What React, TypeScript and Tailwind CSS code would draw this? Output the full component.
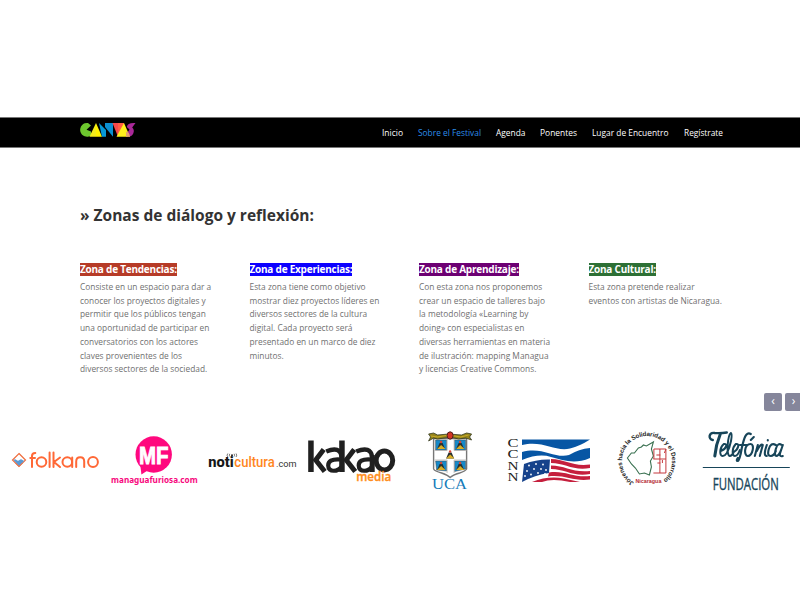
import React from "react";

const nav = [
  { label: "Inicio", w: 21 },
  { label: "Sobre el Festival", w: 63, active: true },
  { label: "Agenda", w: 29.5 },
  { label: "Ponentes", w: 37 },
  { label: "Lugar de Encuentro", w: 76.5 },
  { label: "Regístrate", w: 39 },
];

const zones = [
  {
    title: "Zona de Tendencias:",
    color: "bg-[#b63b27]",
    lines: ["Consiste en un espacio para dar a", "conocer los proyectos digitales y", "permitir que los públicos tengan", "una oportunidad de participar en", "conversatorios con los actores", "claves provenientes de los", "diversos sectores de la sociedad."],
  },
  {
    title: "Zona de Experiencias:",
    color: "bg-[#0c00ff]",
    lines: ["Esta zona tiene como objetivo", "mostrar diez proyectos líderes en", "diversos sectores de la cultura", "digital. Cada proyecto será", "presentado en un marco de diez", "minutos."],
  },
  {
    title: "Zona de Aprendizaje:",
    color: "bg-[#6d0073]",
    lines: ["Con esta zona nos proponemos", "crear un espacio de talleres bajo", "la metodología «Learning by", "doing» con especialistas en", "diversas herramientas en materia", "de ilustración: mapping Managua", "y licencias Creative Commons."],
  },
  {
    title: "Zona Cultural:",
    color: "bg-[#2d7035]",
    lines: ["Esta zona pretende realizar", "eventos con artistas de Nicaragua."],
  },
];

function Logo({ x, children }: { x: number; children: React.ReactNode }) {
  return (
    <svg className="h-[74px] w-[88px] shrink-0 overflow-visible" viewBox={`${x} 427 88 74`}>
      {children}
    </svg>
  );
}

function CanvasLogo() {
  return (
    <svg className="h-[16px] w-[56px]" viewBox="80 122 56 16">
      <path d="M88 123A6.9 6.9 0 1 0 91 135.5V131.5L86.5 129.8L91 125.5Z" fill="#6dc72e" />
      <path d="M96 123V136.7H89.5Z" fill="#f4ec1b" />
      <path d="M96 123L102 136.7H96Z" fill="#fff200" />
      <path d="M99 123L106 130V136.7H102Z" fill="#0798d5" />
      <path d="M105 123H113V136.7L105 127Z" fill="#0b8fd0" />
      <path d="M112.5 123H124L118 136.7Z" fill="#f5494a" />
      <path d="M118 123H124V129L118 136Z" fill="#ff5d43" />
      <path d="M124 123L130 136.7H116.5Z" fill="#fff01b" />
      <path d="M135.5 123Q127.5 122.3 126.8 127L129.5 129.5L127.8 132V136.7A6 5.5 0 0 0 132.2 127.5Z" fill="#a92898" />
      <path d="M126 132Q129 131 130 136.7H126Z" fill="#e6a36c" />
    </svg>
  );
}

function Volcano({ x, y }: { x: number; y: number }) {
  return (
    <g transform={`translate(${x} ${y})`}>
      <path d="M-4 4L-1.5-2L1.5-2L4 4Z" fill="#28302e" />
      <path d="M-4 4L0 0L4 3.5V4Z" fill="#d9ad24" />
      <circle cy="-3" r="1.2" fill="#d54435" />
    </g>
  );
}

const stars = [[529, 465.5], [536, 464], [543, 464.5], [527, 471], [534, 469], [541, 469], [546, 470], [525, 476], [531, 474.5], [538, 473], [545, 474]];

export default function App() {
  return (
    <div className="h-[600px] w-[800px] overflow-hidden bg-white pt-[117px] font-['Open_Sans',sans-serif]">
      <header className="flex h-[31px] items-start justify-between border-y border-[#777] bg-black pl-[80px] pr-[77.5px]">
        <div className="pt-[4px]"><CanvasLogo /></div>
        <nav className="flex gap-[15px] pt-[8px]">
          {nav.map((n) => (
            <svg key={n.label} className="h-[14px] overflow-visible" style={{ width: n.w }}>
              <text x="0" y="9.5" fontSize="8.3" fontWeight="500" textLength={n.w} lengthAdjust="spacingAndGlyphs" fill={n.active ? "#2c8de8" : "#fff"}>{n.label}</text>
            </svg>
          ))}
        </nav>
      </header>

      <main className="px-[80px] pt-[55px]">
        <h1 className="h-[60px] whitespace-nowrap text-[15.5px] leading-[25px] font-bold text-[#333]">» Zonas de diálogo y reflexión:</h1>
        <div className="grid grid-cols-[repeat(4,134px)] gap-x-[35.5px]">
          {zones.map((z) => (
            <section key={z.title}>
              <h2 className={`block h-[13px] w-fit whitespace-nowrap text-[10px] leading-[12.5px] font-bold tracking-[-0.23px] text-white ${z.color}`}>{z.title}</h2>
              <div className="mt-[4px] whitespace-nowrap text-[8.35px] leading-[13.7px] text-[#707070]">
                {z.lines.map((l) => <div key={l}>{l}</div>)}
              </div>
            </section>
          ))}
        </div>
      </main>

      <div className="mt-[17px] flex justify-end gap-[2.5px]">
        {["‹", "›"].map((s) => (
          <button key={s} className="flex h-[18px] w-[18px] items-center justify-center rounded-[2px] bg-[#85869b] pb-[2px] text-[12px] leading-none text-white last:-mr-[2.5px]">{s}</button>
        ))}
      </div>

      <div className="mt-[16px] flex gap-[10.6px] pl-[12px]">
        <Logo x={12}>
          <path d="M19 453.5L25.5 460L19 466.5L12.5 460Z" fill="none" stroke="#ef6c3c" strokeWidth="1.2" />
          <path d="M13.5 460Q15 458.5 16.5 460T19.5 460T22.5 460T25 460L19 466Z" fill="#5b9bd5" />
          <path d="M15.5 463L19 466.5L22.5 463" fill="none" stroke="#e6714d" />
          <g fill="none" stroke="#ff6836" strokeWidth="2" strokeLinecap="round" strokeLinejoin="round">
            <path d="M32 467V456Q32 453 35.3 453M30.3 458H35" />
            <circle cx="41.5" cy="462" r="4.8" />
            <path d="M49.6 452.5V467M53.5 452.5V467M60 457.5L54 462L60 467" />
            <circle cx="67.3" cy="462" r="4.8" /><path d="M72.2 457.5V467M76.2 467V461.5Q76.2 457.3 80.2 457.3T84.2 461.5V467" />
            <circle cx="93" cy="462" r="4.9" />
          </g>
        </Logo>

        <Logo x={110.6}>
          <path d="M140 466L141 474.5L148 470Z" fill="#ff087e" />
          <circle cx="153.3" cy="454.5" r="18.2" fill="#ff087e" />
          <text x="138.5" y="463.5" textLength="29.5" lengthAdjust="spacingAndGlyphs" fontFamily="Liberation Sans,sans-serif" fontSize="24" fontWeight="700" fill="white" stroke="white" strokeWidth=".9">MF</text>
          <text x="110.7" y="483" textLength="86.5" lengthAdjust="spacingAndGlyphs" fontFamily="Noto Sans,sans-serif" fontSize="9.3" fontWeight="700" fill="#f7087d">managuafuriosa.com</text>
        </Logo>

        <Logo x={209.2}>
          <text x="208.5" y="467" textLength="25.5" lengthAdjust="spacingAndGlyphs" fontFamily="Roboto,sans-serif" fontSize="14" fontWeight="800" fill="#171717">noti</text>
          <text x="234.5" y="467" textLength="40.5" lengthAdjust="spacingAndGlyphs" fontFamily="Roboto,sans-serif" fontSize="14" fontWeight="500" fill="#ff861d">cultura</text>
          <text x="276.3" y="467" textLength="20.5" lengthAdjust="spacingAndGlyphs" fontFamily="Roboto,sans-serif" fontSize="9.5" fill="#333">.com</text>
          <circle cx="232.2" cy="455.2" r="1" fill="#222" />
          <path d="M228 453.5Q226.5 455.2 228 457M230 453.8Q229 455.2 230 456.5M234.3 453.8Q235.3 455.2 234.3 456.5M236.3 453.5Q237.5 455.2 236.3 457" fill="none" stroke="#555" strokeWidth=".8" />
        </Logo>

        <Logo x={307.8}>
          <path d="M308 440.5H313.5V472H308ZM339 440.5H344.5V472H339ZM369.5 455H374.5V472H369.5Z" fill="#202020" />
          <g fill="none" stroke="#202020" strokeWidth="5">
            <path d="M323.5 449.5L315.5 460L324.5 471.5M354 449.5L346 460L355 471.5" />
            <path d="M326 451.5Q340 445.5 341.5 457M356 451.5Q370.5 445.5 372 457" strokeWidth="4.4" />
            <path d="M341 459.5C331 458.5 328 461.5 328 465.5C328 473 338 471.5 341 467M371.5 459.5C361.5 458.5 358.5 461.5 358.5 465.5C358.5 473 368.5 471.5 371.5 467" strokeWidth="4.2" />
            <ellipse cx="384.2" cy="460.5" rx="8.3" ry="9.4" />
          </g>
          <text x="356" y="481" textLength="35" lengthAdjust="spacingAndGlyphs" fontFamily="Open Sans,sans-serif" fontSize="12.5" fontWeight="600" fill="#ff8d20" stroke="#ff8d20" strokeWidth=".35">media</text>
        </Logo>

        <Logo x={406.4}>
          <path d="M434 438.5H467V469Q466 471 460 473Q453 475 450.5 477.5Q448 475 442 473Q435 471 434 469Z" fill="white" stroke="#777" strokeWidth="1.4" />
          <path d="M436 440H447V450H436ZM455 440H466V450H455ZM436 461H447V471L437 470ZM455 461H466V469L455 471.5Z" fill="#1689c9" stroke="#444" strokeWidth=".5" />
          <path d="M447.5 439V450.5H435M454.5 439V450.5H467M447.5 473V460H435M454.5 473V460H467" fill="none" stroke="#aaa" strokeWidth=".7" />
          <Volcano x={441.5} y={445} /><Volcano x={460.5} y={445} /><Volcano x={450.5} y={454.5} /><Volcano x={441.5} y={466} /><Volcano x={460.5} y={466} />
          <path d="M429 434L434 433L438 435L449 434L462 435L467 433L472 434L470 437L472 440L466 438L459 439L451 437L438 439L434 438L429 441L431 437Z" fill="#94831a" stroke="#333a22" strokeWidth=".8" />
          <path d="M431 436L438 437L449 435L461 437L469 435" fill="none" stroke="#d4b52d" strokeWidth=".8" />
          <ellipse cx="450.5" cy="435.5" rx="3" ry="3.7" fill="#d33525" stroke="#511f1b" />
          <text x="432.5" y="489" textLength="35" lengthAdjust="spacingAndGlyphs" fontFamily="Liberation Serif,serif" fontSize="15.5" fill="#147bb9">UCA</text>
        </Logo>

        <Logo x={505}>
          <g fontFamily="Liberation Serif,serif" fontSize="11.5" fill="#222">
            {["C", "C", "N", "N"].map((c, i) => <text key={i} x="507.5" y={447.3 + i * 11.1} textLength="11" lengthAdjust="spacingAndGlyphs">{c}</text>)}
          </g>
          <path d="M522 439.5H590Q580 446 570 448.5C555 452 543 440 522 445Z" fill="#0756a4" />
          <path d="M522 452C542 446 555 459 569 455Q579 449 590 448V458C574 465 563 460 551 457Q539 453 522 460Z" fill="#0756a4" />
          <path d="M524 464Q537 459 550 459.5L549 473Q535 475 522 482Z" fill="#16428b" />
          {stars.map(([x, y], i) => <circle key={i} cx={x} cy={y} r=".9" fill="white" />)}
          <path d="M551 459C565 459 573 467 590 464.5V468C573 471 565 463 551 463ZM551 465.5C565 465.5 573 473 590 471V474C573 477 565 469 551 469ZM549 472.5C564 470 574 478 590 476V479.5C574 482 564 474 548 476.5ZM532 482Q548 475.5 564 478.5L580 482H570Q552 478 542 482Z" fill="#c51f3d" />
        </Logo>

        <Logo x={603.6}>
          <path id="youth-arc" d="M633.5 482.3A25 25 0 1 1 662 480.7" fill="none" />
          <text fontFamily="Liberation Sans,sans-serif" fontSize="6.2" fontWeight="700" fill="#222">
            <textPath href="#youth-arc" textLength="125">Jóvenes hacia la Solidaridad y el Desarrollo</textPath>
          </text>
          <path d="M627 458L631 453L634 453L638 448L641 447L643 445L646 446L653 442L651 449L653 456L650 461L651 467L649 475L644 473L639 474L635 468L631 464Z" fill="none" stroke="#397050" strokeWidth="1.1" />
          <path d="M653.5 449H665.5V473M653.5 449V459M659.5 449V473M665.5 449L664 453M653 459H665.5M653 473H665.5M656 455H660M657 463H660M662 460V463" fill="none" stroke="#c4393d" strokeWidth="1" />
          <text x="635" y="482.5" textLength="26" lengthAdjust="spacingAndGlyphs" fontFamily="Liberation Sans,sans-serif" fontSize="6.2" fontWeight="700" fill="#b52b32">Nicaragua</text>
        </Logo>

        <Logo x={702.2}>
          <g fill="none" stroke="#174559" strokeLinecap="round" strokeLinejoin="round">
            <path d="M713 440C708 439 709 432 715 433Q721 433.5 727 432.5" strokeWidth="2.4" />
            <path d="M720.5 434Q716 445 715 456" strokeWidth="3" />
            <path d="M721 451C727 449 728 443 724 444C720 447 719 456 723 456Q725 456 727 453C731 446 733 434 731 433C728 435 726 456 730 456Q732 456 734 452C739 449 740 443 736 444C732 448 732 456 735 456Q738 456 740 450" strokeWidth="2" />
            <path d="M751 434C746 431 744 439 742 448Q740 460 738 461Q736 461 738 458M740 445H747" strokeWidth="2.2" />
            <path d="M751 444C744 444 744 456 748 456C753 456 755 444 751 444M751 440L754 437M755 456L758 445M757 451Q761 443 763 445L760 456M767 445Q763 456 767 456M768 440.5V440M776 445Q771 442 769 449Q767 456 771 456Q774 456 776 451M782 445Q778 442 776 449Q774 456 777 456Q780 455 783 445L780 454Q780 457 783 456" strokeWidth="2.1" />
          </g>
          <path d="M703 467.5H790" stroke="#174559" strokeWidth="1.2" />
          <text x="713" y="490" textLength="66" lengthAdjust="spacingAndGlyphs" fontFamily="Open Sans,sans-serif" fontSize="16.5" fill="#174559" stroke="#174559" strokeWidth=".35">FUNDACIÓN</text>
        </Logo>
      </div>
    </div>
  );
}
